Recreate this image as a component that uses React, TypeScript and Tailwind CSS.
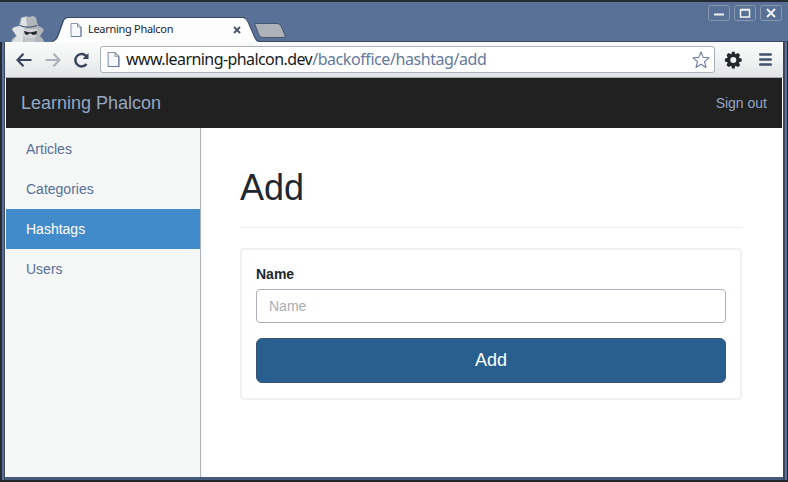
import React from "react";

function PageIcon({ className }: { className: string }) {
  return (
    <svg viewBox="0 0 12 14" className={className} fill="#f6f7f8" stroke="#8895aa" strokeWidth="1">
      <path d="M1 .5H7.5L11 4V13.5H1Z" />
      <path d="M7.5 .5V4H11" fill="none" />
      <path d="M1 13.5H11V4" fill="none" stroke="#667b9e" />
    </svg>
  );
}

function Incognito() {
  return (
    <svg viewBox="0 0 34 26" className="h-[26px] w-[34px]">
      <path d="M0 26 1 23 5 20 1 13.5 3 11 8 10 10 1.5 13 1 15 0 18 1 22 0 25 1.5 27 10 31 11.5 33 14 29 20 32 23 33 26Z" fill="#b1b6bb" />
      <path d="M1 13 4 11 9 10 11 2 15 1 16 10 13 13 12 26H1L6 20Z" fill="#e0e3e5" />
      <path d="M9 9.5Q17 13 26 9.5" fill="none" stroke="#42506a" strokeWidth="1.2" />
      <path d="M13 13H26L25 21 19 23 13 21Z" fill="#ced2d5" />
      <path d="M13 15 18 16.3 20 16.3 26 15 25.5 18.3 22 19 20 17.6 18 17.6 16.5 19 14 18.3Z" fill="#23272d" />
      <path d="M13 21 19 24 25 21 23 26H14Z" fill="#c5c9cc" />
    </svg>
  );
}

function TitleBar() {
  return (
    <div className="flex h-[42px] items-end border-t-2 border-[#252a33] bg-[#597196]">
      <div className="ml-[11px] w-[41px]"><Incognito /></div>
      <div className="relative flex h-[25px] w-[234px]">
        <svg viewBox="0 0 234 25" className="absolute inset-0 h-[25px] w-[234px]">
          <path d="M0 25Q5 24 7 18L12 4Q13 1 16 1H191Q194 1 196 5L203 22Q204 25 207 25Z" fill="#fdfdfd" />
          <path d="M0 24.5Q4 24 6 18L11 4Q12 .5 16 .5H191Q194 .5 196 5L203 21Q205 24.5 208 24.5H234" fill="none" stroke="#39475f" />
          <path d="M202.5 6.5H225Q228 6.5 229 9L233 18Q234 20.5 231 20.5H211Q208 20.5 207 18Z" fill="#adb2b8" stroke="#47566f" />
        </svg>
        <div className="relative flex h-6 w-[207px] items-center pl-[18px] pt-0.5">
          <PageIcon className="h-[14px] w-3" />
          <span className="-mt-0.5 ml-[6px] w-[145px] whitespace-nowrap font-['Noto_Sans',sans-serif] text-[11px] tracking-[-0.3px] text-[#20252c]">Learning Phalcon</span>
          <svg viewBox="0 0 8 8" className="h-[8px] w-[8px]" stroke="#46536b" strokeWidth="1.8"><path d="M1 1 7 7M7 1 1 7" /></svg>
        </div>
      </div>
      <div className="h-px flex-1 bg-[#39475f]" />
      <div className="-ml-[80px] mr-[6px] flex gap-1 self-start pt-[3px]">
        {[
          <path key="a" d="M6 9.5H16" strokeWidth="2" />,
          <path key="b" d="M6.5 5H15.5V12H6.5ZM6 4.5H16" strokeWidth="1.5" />,
          <path key="c" d="M7 4 15 12M15 4 7 12" strokeWidth="2" />,
        ].map((mark, i) => (
          <svg key={i} viewBox="0 0 22 16" className="h-4 w-[22px]" fill="none" stroke="#f0f2f4">
            <rect x=".5" y=".5" width="21" height="15" rx="2" stroke="#8997af" />
            {mark}
          </svg>
        ))}
      </div>
    </div>
  );
}

function Toolbar() {
  return (
    <div className="flex h-9 items-center rounded-t-[3px] border-b border-[#a9adb3] bg-linear-to-b from-[#fafbfb] via-[#f1f2f2] to-[#e2e4e6] pl-[11px] pr-[9px]">
      <svg viewBox="0 0 16 14" className="h-[14px] w-4" fill="none" stroke="#39465e" strokeWidth="2.2"><path d="M15.5 7H2M7.5 .8 1.5 7 7.5 13.2" /></svg>
      <svg viewBox="0 0 16 14" className="ml-[13px] h-[14px] w-4" fill="none" stroke="#adb1b7" strokeWidth="2.2"><path d="M.5 7H14M8.5 .8 14.5 7 8.5 13.2" /></svg>
      <svg viewBox="0 0 16 16" className="ml-[12px] mr-px h-4 w-4" fill="none" stroke="#39465e" strokeWidth="2.5"><path d="M13.5 12A6.2 6.2 0 1 1 12 3L14 5" /><path d="M15.5 1V7H9.5Z" fill="#39465e" stroke="none" /></svg>
      <div className="ml-[10px] flex h-[27px] w-[615px] items-center rounded-[3px] border border-[#a9aeb7] bg-white pl-[6px] pr-[4px]">
        <PageIcon className="h-[15px] w-[13px]" />
        <span className="-mt-0.5 ml-[6px] flex-1 whitespace-nowrap font-['Noto_Sans',sans-serif] text-[16px] leading-5 tracking-[-0.43px] text-[#647a9e]"><span className="tracking-[-0.58px] text-[#171b21]">www.learning-phalcon.dev</span>/backoffice/hashtag/add</span>
        <svg viewBox="0 0 18 18" className="h-[18px] w-[18px]" fill="#fff" stroke="#6d7f9d" strokeWidth="1.1" strokeLinejoin="round"><path d="M9 1 11.2 6.4 17 6.8 12.5 10.6 14 16.5 9 13.3 4 16.5 5.5 10.6 1 6.8 6.8 6.4Z" /></svg>
      </div>
      <svg viewBox="0 0 18 18" className="ml-[9px] h-[18px] w-[18px]">
        <path fillRule="evenodd" fill="#23262b" d="M8 .7H10.6L11.3 3.2 14.2 2.1 16 3.9 14.9 6.8 17.7 7.8V10.4L14.9 11.3 16 14.2 14.2 16 11.3 14.8 10.6 17.5H8L7.3 14.8 4.4 16 2.6 14.2 3.7 11.3 .9 10.4V7.8L3.7 6.8 2.6 3.9 4.4 2.1 7.3 3.2ZM9.3 6.1A3 3 0 1 0 9.3 12.1 3 3 0 1 0 9.3 6.1Z" />
      </svg>
      <svg viewBox="0 0 13 13" className="ml-[17px] h-[13px] w-[13px]" stroke="#43526c" strokeWidth="2.6" strokeLinecap="round"><path d="M1.3 1.5H11.7M1.3 6.5H11.7M1.3 11.5H11.7" /></svg>
    </div>
  );
}

export default function App() {
  return (
    <div className="h-[482px] w-[788px] overflow-hidden bg-[#20242b] font-['Liberation_Sans',sans-serif] text-sm">
      <TitleBar />
      <div className="flex h-[440px] pb-[2px]">
        <div className="w-[5px] shrink-0 border-l-2 border-r border-l-[#252a33] border-r-[#39465d] bg-[#597196]" />
        <div className="w-[778px] shrink-0 border-b-[3px] border-[#455b7c] bg-white">
          <Toolbar />
          <div className="ml-px w-[776px]">
            <header className="flex h-[50px] items-center justify-between bg-[#212121] px-[15px] text-[#94a7c3]">
              <span className="pt-0.5 text-[18px]">Learning Phalcon</span>
              <span>Sign out</span>
            </header>
            <div className="flex h-[349px]">
              <nav className="w-[195px] border-r border-[#afb3ba] bg-[#f5f6f6] pt-[1px] text-[#557097]">
                <div className="flex h-10 items-center pl-5">Articles</div>
                <div className="flex h-10 items-center pl-5">Categories</div>
                <div className="flex h-10 items-center bg-[#428bca] pl-5 text-white">Hashtags</div>
                <div className="flex h-10 items-center pl-5">Users</div>
              </nav>
              <main className="flex-1 border-l-2 border-[#f7f8f8] pl-[37px] pr-[40px]">
                <h1 className="h-[100px] border-b border-[#eeefef] pt-[40px] text-[36px] leading-10 text-[#20272f]">Add</h1>
                <form className="mt-5 h-[152px] rounded-[4px] border-2 border-[#f0f1f1] px-[14px] pt-[15px]">
                  <label className="block h-6 font-bold leading-[18px] text-[#20272f]">Name</label>
                  <div className="flex h-[34px] items-center rounded-[4px] border border-[#abb0bb] pl-3 text-[#a9aeb5]">Name</div>
                  <button className="mt-[15px] block h-[45px] w-full rounded-[6px] border border-[#385471] bg-[#295f8e] text-[18px] text-white">Add</button>
                </form>
              </main>
            </div>
          </div>
        </div>
        <div className="w-[4px] shrink-0 border-l-2 border-[#39465d] bg-[#597196]" />
      </div>
    </div>
  );
}
